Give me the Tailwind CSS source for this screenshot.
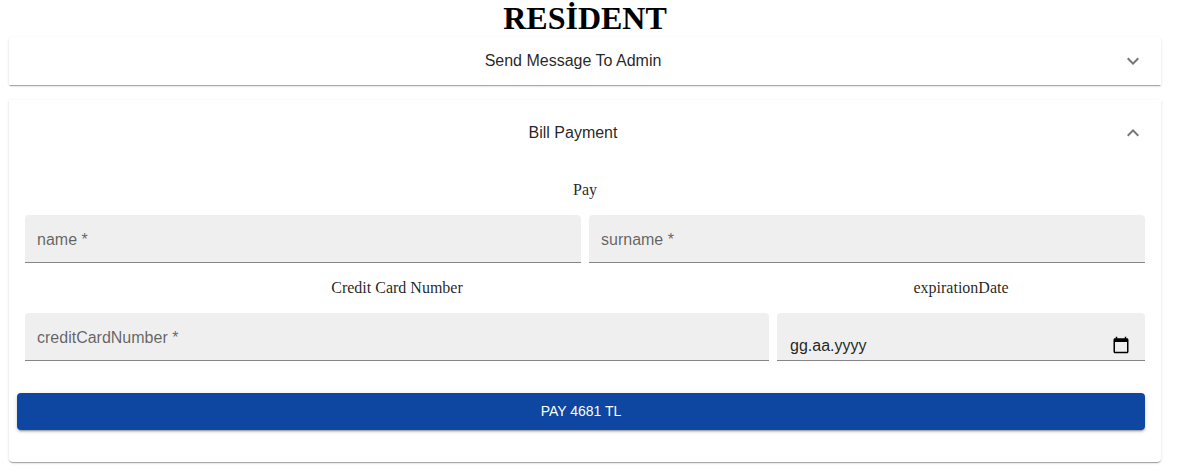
<!DOCTYPE html>
<html lang="tr">
<head>
<meta charset="utf-8">
<meta name="viewport" content="width=device-width, initial-scale=1">
<title>Resident</title>
<script src="https://cdn.jsdelivr.net/npm/@tailwindcss/browser@4"></script>
</head>
<body class="bg-white pl-[9px] pr-[38px] pb-3 font-['Liberation_Sans',Arial,sans-serif] text-base text-black/87">
<h1 class="text-center font-['Liberation_Serif','Times_New_Roman',serif] text-[32px] leading-[37px] font-bold text-black">RESİDENT</h1>

<main class="flex flex-col gap-[15px]">
  <section class="rounded-t shadow-[0_2px_1px_-1px_rgba(0,0,0,0.2),0_1px_1px_0_rgba(0,0,0,0.14),0_1px_3px_0_rgba(0,0,0,0.12)]">
    <h2>
      <button type="button" aria-expanded="false" class="flex h-12 w-full items-center px-4">
        <span class="grow text-center">Send Message To Admin</span>
        <svg class="size-6 shrink-0 fill-black/54" viewBox="0 0 24 24" aria-hidden="true"><path d="M16.59 8.59 12 13.17 7.41 8.59 6 10l6 6 6-6z"/></svg>
      </button>
    </h2>
  </section>

  <section class="rounded-b shadow-[0_2px_1px_-1px_rgba(0,0,0,0.2),0_1px_1px_0_rgba(0,0,0,0.14),0_1px_3px_0_rgba(0,0,0,0.12)]">
    <h2>
      <button type="button" aria-expanded="true" class="flex h-[66px] w-full items-center px-4">
        <span class="grow text-center">Bill Payment</span>
        <svg class="size-6 shrink-0 rotate-180 fill-black/54" viewBox="0 0 24 24" aria-hidden="true"><path d="M16.59 8.59 12 13.17 7.41 8.59 6 10l6 6 6-6z"/></svg>
      </button>
    </h2>

    <form class="pr-4 pb-8 pl-2">
      <fieldset class="pl-2">
        <legend class="w-full pt-3 pb-[13px] text-center font-['Liberation_Serif','Times_New_Roman',serif] leading-6">Pay</legend>
        <div class="grid grid-cols-2 gap-2">
          <input type="text" required aria-label="name" placeholder="name *" class="h-12 w-full min-w-0 rounded-t border-b border-[#868686] bg-[#efefef] px-3 pt-[2px] placeholder:text-black/60">
          <input type="text" required aria-label="surname" placeholder="surname *" class="h-12 w-full min-w-0 rounded-t border-b border-[#868686] bg-[#efefef] px-3 pt-[2px] placeholder:text-black/60">
        </div>
      </fieldset>

      <div class="grid grid-cols-12 gap-2 pl-2">
        <div class="col-span-8">
          <label for="card" class="block py-[13px] text-center font-['Liberation_Serif','Times_New_Roman',serif] leading-6">Credit Card Number</label>
          <input id="card" type="text" required placeholder="creditCardNumber *" class="h-12 w-full rounded-t border-b border-[#868686] bg-[#efefef] px-3 pt-[2px] placeholder:text-black/60">
        </div>
        <div class="col-span-4">
          <label for="expiry" class="block py-[13px] text-center font-['Liberation_Serif','Times_New_Roman',serif] leading-6">expirationDate</label>
          <div class="flex h-12 items-end rounded-t border-b border-[#868686] bg-[#efefef] pr-[15px] pb-[3px] pl-[13px]">
            <input id="expiry" type="text" placeholder="gg.aa.yyyy" class="min-w-0 grow bg-transparent leading-[22px] placeholder:text-black/87">
            <button type="button" aria-label="Open calendar" class="flex h-6 items-center">
              <svg class="size-[18px] fill-black" viewBox="0 0 24 24" aria-hidden="true"><path d="M20 3h-1V1h-2v2H7V1H5v2H4c-1.1 0-2 .9-2 2v16c0 1.100.9 2 2 2h16c1.100 0 2-.9 2-2V5c0-1.100-.9-2-2-2zm0 18H4V8h16v13z"/></svg>
            </button>
          </div>
        </div>
      </div>

      <button type="submit" class="mt-8 block h-[37px] w-full rounded bg-[#0d47a1] pb-[2px] text-sm font-medium text-white uppercase shadow-[0_3px_1px_-2px_rgba(0,0,0,0.2),0_2px_2px_0_rgba(0,0,0,0.14),0_1px_5px_0_rgba(0,0,0,0.12)]">Pay 4681 TL</button>
    </form>
  </section>
</main>
</body>
</html>
